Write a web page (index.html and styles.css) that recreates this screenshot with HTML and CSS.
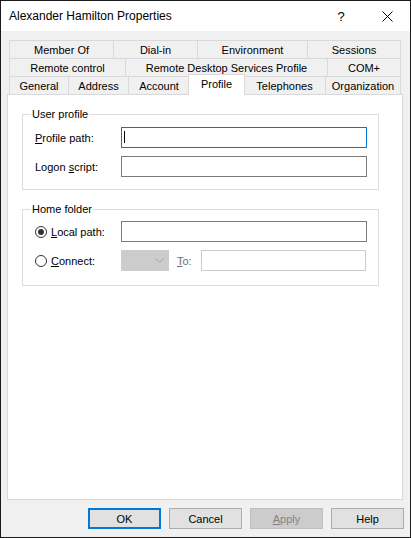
FILE: index.html
```html
<!DOCTYPE html>
<html>
<head>
<meta charset="utf-8">
<title>Alexander Hamilton Properties</title>
<link rel="stylesheet" href="styles.css">
</head>
<body>
<div class="window">
  <div class="titlebar">
    <div class="title">Alexander Hamilton Properties</div>
    <div class="tb-btn help">?</div>
    <div class="tb-btn close">
      <svg width="11" height="11" viewBox="0 0 11 11"><path d="M0.5 0.5L10.5 10.5M10.5 0.5L0.5 10.5" stroke="#000" stroke-width="1" fill="none"/></svg>
    </div>
  </div>
  <div class="client">
    <div class="tabs">
      <div class="tabrow r1">
        <div class="tab">Member Of</div>
        <div class="tab">Dial-in</div>
        <div class="tab">Environment</div>
        <div class="tab">Sessions</div>
      </div>
      <div class="tabrow r2">
        <div class="tab">Remote control</div>
        <div class="tab">Remote Desktop Services Profile</div>
        <div class="tab">COM+</div>
      </div>
      <div class="tabrow r3">
        <div class="tab">General</div>
        <div class="tab">Address</div>
        <div class="tab">Account</div>
        <div class="tab sel">Profile</div>
        <div class="tab">Telephones</div>
        <div class="tab">Organization</div>
      </div>
    </div>
    <div class="panel">
      <fieldset class="fs1">
        <legend>User profile</legend>
        <div class="grid">
          <div class="label"><u>P</u>rofile path:</div>
          <div class="input focus"><span class="caret"></span></div>
          <div class="label">Logon <u>s</u>cript:</div>
          <div class="input"></div>
        </div>
      </fieldset>
      <fieldset class="fs2">
        <legend>Home folder</legend>
        <div class="grid">
          <div class="radio"><span class="rb on"></span><span><u>L</u>ocal path:</span></div>
          <div class="input"></div>
          <div class="radio"><span class="rb"></span><span><u>C</u>onnect:</span></div>
          <div class="connect">
            <div class="combo">
              <svg width="9" height="5" viewBox="0 0 9 5"><path d="M0.5 0.5L4.5 4.5L8.5 0.5" stroke="#a3a3a3" stroke-width="1" fill="none"/></svg>
            </div>
            <div class="to"><u>T</u>o:</div>
            <div class="input dis"></div>
          </div>
        </div>
      </fieldset>
    </div>
    <div class="buttons">
      <div class="btn def">OK</div>
      <div class="btn">Cancel</div>
      <div class="btn dis"><span><u>A</u>pply</span></div>
      <div class="btn">Help</div>
    </div>
  </div>
</div>
</body>
</html>
```
FILE: styles.css
```css
* { box-sizing: border-box; }
html, body { margin: 0; padding: 0; background: #fff; }
body {
  font-family: "Liberation Sans", Arial, sans-serif;
  font-size: 11px;
  color: #000;
}
.window {
  width: 411px;
  height: 538px;
  border: 1px solid #1a1a1a;
  background: #f0f0f0;
  display: flex;
  flex-direction: column;
}
.titlebar {
  height: 30px;
  flex: none;
  background: #fff;
  display: flex;
  align-items: center;
}
.title {
  flex: 1;
  padding-left: 8px;
  font-size: 12px;
  line-height: 30px;
}
.tb-btn {
  width: 45px;
  height: 30px;
  display: flex;
  align-items: center;
  justify-content: center;
}
.tb-btn.help { font-size: 13px; padding-right: 3px; }
.client {
  flex: 1;
  display: flex;
  flex-direction: column;
  padding-top: 9px;
}
.tabs {
  margin-left: 8px;
  width: 392px;
}
.tabrow {
  display: grid;
  height: 18px;
}
.r1 { grid-template-columns: 104px 84px 110px 94px; }
.r2 { grid-template-columns: 116px 202px 74px; }
.r3 { grid-template-columns: 59px 60px 61px 54px 82px 76px; }
.tab {
  height: 18px;
  border-top: 1px solid #d9d9d9;
  border-left: 1px solid #d9d9d9;
  padding-top: 1px;
  line-height: 16px;
  text-align: center;
  white-space: nowrap;
}
.tab:last-child { border-right: 1px solid #d9d9d9; }
.tab.sel {
  background: #fff;
  height: 21px;
  margin: -2px -2px -1px -1px;
  border-right: 1px solid #d9d9d9;
  position: relative;
  z-index: 1;
}
.panel {
  margin-left: 6px;
  width: 396px;
  height: 406px;
  flex: none;
  background: #fff;
  border: 1px solid #d9d9d9;
  padding: 12px 0 0 14px;
}
fieldset {
  margin: 0;
  min-width: 0;
  width: 357px;
  border: 1px solid #dcdcdc;
  padding: 5px 11px 12px 12px;
}
legend {
  padding: 0 1px;
  margin-left: -4px;
  line-height: 15px;
  font-size: 11px;
}
.fs2 {
  margin-top: 12px;
  padding-top: 4px;
  padding-bottom: 14px;
}
.grid {
  display: grid;
  grid-template-columns: 86px 246px;
  row-gap: 8px;
  align-items: center;
}
.label { white-space: nowrap; }
.input {
  height: 21px;
  border: 1px solid #7a7a7a;
  background: #fff;
}
.input.focus { border-color: #0078d7; }
.input.dis { border-color: #cccccc; }
.caret {
  display: block;
  width: 1px;
  height: 12px;
  margin: 3px 0 0 2px;
  background: #000;
}
.radio {
  display: flex;
  align-items: center;
  gap: 4px;
  white-space: nowrap;
}
.rb {
  width: 12px;
  height: 12px;
  border: 1px solid #333;
  border-radius: 50%;
  background: #fff;
  display: flex;
  align-items: center;
  justify-content: center;
}
.rb.on::after {
  content: "";
  width: 6px;
  height: 6px;
  border-radius: 50%;
  background: #333;
}
.connect {
  display: flex;
  align-items: center;
}
.combo {
  width: 48px;
  height: 21px;
  background: #cccccc;
  border: 1px solid #cccccc;
  display: flex;
  align-items: center;
  justify-content: flex-end;
  padding-right: 4px;
}
.to {
  color: #6d6d6d;
  margin: 0 8px 0 8px;
  width: 16px;
}
.connect .input {
  flex: 1;
  margin-right: 1px;
}
.buttons {
  display: flex;
  justify-content: flex-end;
  gap: 8px;
  padding: 8px 6px 0 0;
}
.btn {
  width: 73px;
  height: 21px;
  background: #e1e1e1;
  border: 1px solid #adadad;
  display: flex;
  align-items: center;
  justify-content: center;
}
.btn.def { border: 2px solid #0078d7; }
.btn.dis {
  background: #cccccc;
  border-color: #bfbfbf;
  color: #838383;
}
```
